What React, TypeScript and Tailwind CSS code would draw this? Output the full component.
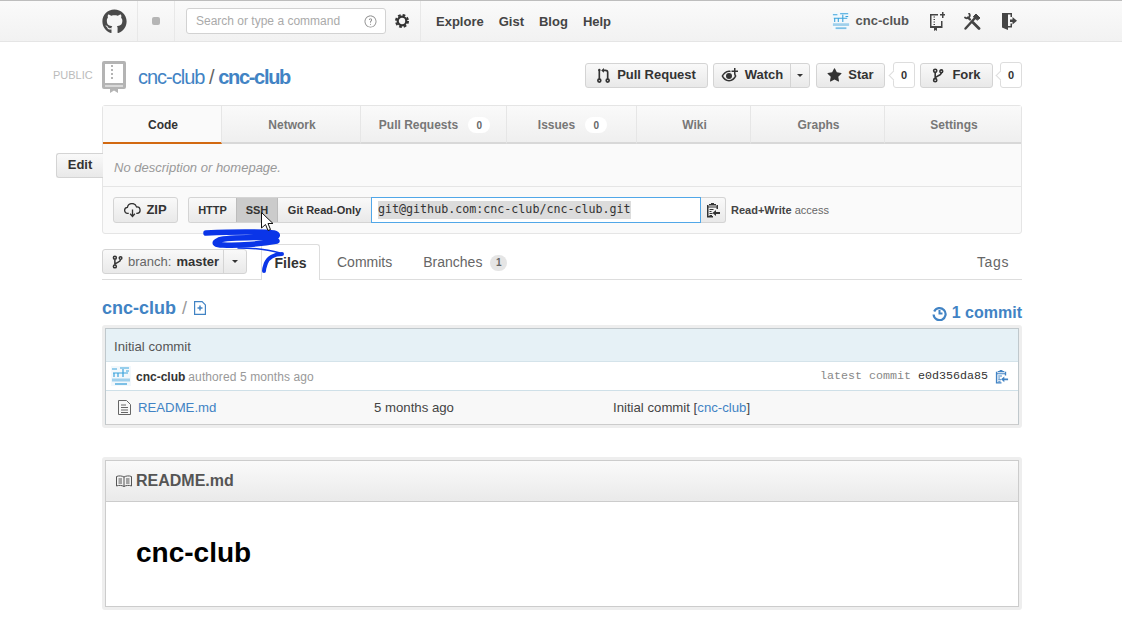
import React from "react";
import { FaGithub } from "react-icons/fa";
import { GoStarFill, GoQuestion } from "react-icons/go";

const Clippy = ({ className }: { className?: string }) => (
  <svg viewBox="0 0 16 16" className={className} fill="currentColor">
    <path d="M6 1h3v1h2v1.500H4V2h2V1zM2 3h1.500v1.500h8V3H13v4h-1.500V5.500h-8V14H8v1.500H2V3z" />
    <path d="M4.500 7h4v1h-4zM4.500 9h2v1h-2zM4.500 11h3v1h-3zM4.500 13H7v1H4.500z" />
    <path d="M11 8v2h4v2h-4v2l-3.500-3z" />
  </svg>
);

const Avatar = ({ className }: { className?: string }) => (
  <svg viewBox="0 0 20 20" className={className}>
    <rect width="20" height="20" fill="#f2f8fc" />
    <path d="M1 3h5M9 2h9M2 7h15M3 7v4M7 7v4M12 3v8M15 5h3" stroke="#3aa3dc" strokeWidth="1.200" fill="none" />
    <rect x="1" y="12.500" width="18" height="3" fill="#9fd0ec" />
    <rect x="4" y="17" width="12" height="2" fill="#7cc0e6" />
  </svg>
);

const Branch = ({ className }: { className?: string }) => (
  <svg viewBox="0 0 12 16" className={className} fill="none" stroke="currentColor" strokeWidth="1.700">
    <circle cx="3" cy="3" r="1.700" />
    <circle cx="3" cy="13" r="1.700" />
    <circle cx="9.500" cy="3.500" r="1.500" />
    <path d="M3 4.800v6.400M9.500 5c0 3.500-5.500 3-6.500 6" />
  </svg>
);

const PullRequest = ({ className }: { className?: string }) => (
  <svg viewBox="0 0 14 16" className={className} fill="none" stroke="currentColor" strokeWidth="1.800">
    <circle cx="2.500" cy="13.500" r="1.600" />
    <circle cx="11.500" cy="13.500" r="1.600" />
    <path d="M2.500 11.800V2M11.500 11.800V4.500c0-1.500-1-2-2.500-2H7" />
    <path d="M7.500 0v5L4.500 2.500z" fill="currentColor" stroke="none" />
    <circle cx="2.500" cy="2" r="1.300" fill="currentColor" stroke="none" />
  </svg>
);

const ButtonBase =
  "flex h-[25px] items-center rounded-[3px] border border-[#d4d4d4] bg-linear-to-b from-[#f9f9f9] to-[#e9e9e9] text-[13px] font-bold text-[#333]";

const Count = ({ n, className }: { n: number; className: string }) => (
  <div className={`relative flex h-[26px] w-[22px] items-center justify-center rounded-[3px] border border-[#ddd] bg-white text-[11px] font-bold text-[#333] ${className}`}>
    <span className="absolute left-[-4px] top-[9px] h-[7px] w-[7px] rotate-45 border-b border-l border-[#ddd] bg-white" />
    {n}
  </div>
);

const tabs = [
  { label: "Code", w: "w-[119px]", on: true },
  { label: "Network", w: "w-[139px]" },
  { label: "Pull Requests", w: "w-[146px]", badge: 0 },
  { label: "Issues", w: "w-[130px]", badge: 0 },
  { label: "Wiki", w: "w-[114px]" },
  { label: "Graphs", w: "w-[134px]" },
  { label: "Settings", w: "w-[136px]" },
];

const App: React.FC = () => {
  return (
    <div
      className="relative h-[629px] w-[1122px] overflow-hidden bg-white text-[#333]"
      style={{ fontFamily: '"Liberation Sans", Arial, sans-serif' }}
    >
      {/* Top bar */}
      <div className="flex h-[42px] border-t border-b border-t-[#bdbdbd] border-b-[#e5e5e5] bg-linear-to-b from-[#fafafa] to-[#f2f2f2] pl-[102px]">
        <div className="flex w-[35px] items-center">
          <FaGithub className="h-[25px] w-[25px] text-[#4a4a4a]" />
        </div>
        <div className="flex w-[38px] items-center justify-center border-x border-[#e8e8e8]">
          <span className="h-[8px] w-[8px] rounded-[2px] bg-[#b5b5b5]" />
        </div>
        <div className="flex items-center pl-[11px]">
          <div className="flex h-[26px] w-[200px] items-center justify-between whitespace-nowrap rounded-[3px] border border-[#d2d2d2] bg-white pl-[9px] pr-[8px] text-[12px] text-[#aaa]">
            <span>Search or type a command</span>
            <GoQuestion className="h-[13px] w-[13px] text-[#888]" />
          </div>
          <svg viewBox="0 0 16 16" className="ml-[8px] h-[16px] w-[16px] text-[#333]" fill="none" stroke="currentColor">
            <circle cx="8" cy="8" r="4.300" strokeWidth="2.200" />
            <circle cx="8" cy="8" r="6" strokeWidth="2" strokeDasharray="2.700 2" />
          </svg>
        </div>
        <div className="ml-[10px] flex items-center gap-[15px] border-l border-[#e8e8e8] pl-[15px] pt-[2px] text-[13px] font-bold text-[#444]">
          <span>Explore</span>
          <span>Gist</span>
          <span>Blog</span>
          <span>Help</span>
        </div>
        <div className="ml-auto flex items-center pr-[105px]">
          <Avatar className="h-[18px] w-[18px]" />
          <span className="ml-[6px] text-[13px] font-bold text-[#555]">cnc-club</span>
          <svg viewBox="0 -1 16 19" className="ml-[20px] h-[19px] w-[16px] text-[#444]" fill="currentColor">
            <path d="M1 1h8v1.500H2.500V13H12V8h1.500v7H8v3l-1.500-1L5 18v-3H1V1z" />
            <path d="M4.500 3.500H6v1H4.500zM4.500 6H6v1H4.500zM4.500 8.500H6v1H4.500zM4.500 11H6v1H4.500zM11 1h2V-1h1.500V1H16v1.500h-1.500v2.500H13V2.500h-2z" />
          </svg>
          <svg viewBox="0 0 17 17" className="ml-[19px] h-[17px] w-[17px] text-[#444]" fill="none" stroke="currentColor" strokeLinecap="round">
            <path d="M1.500 15.500 11 5" strokeWidth="2.400" />
            <path d="M9.500 3.500 12 1l4 4-2.500 2z" fill="currentColor" strokeWidth="1" />
            <path d="M6 6.500 4 4.500" strokeWidth="2.400" />
            <path d="M1 4.500a3.200 3.200 0 0 0 4-.1 3.200 3.200 0 0 0 .1-3.900" strokeWidth="1.800" />
            <path d="M9 9.500 15 15.500" strokeWidth="2.800" />
          </svg>
          <svg viewBox="0 0 16 18" className="ml-[20px] h-[18px] w-[16px] text-[#444]" fill="currentColor">
            <path d="M1 1h10v4H9.500V2.500H7V14h2.500v-2.500H11V15.500H7V18L1 15.500V1z" />
            <path d="M11.500 5v2.500H9v2.500h2.500v2.500L16 8.800z" />
          </svg>
        </div>
      </div>

      <div className="ml-[102px] w-[920px]">
        {/* Repo title and actions */}
        <div className="flex h-[63px] items-center pt-[3px]">
          <span className="-ml-[49px] w-[49px] text-[11px] text-[#bbb]">PUBLIC</span>
          <svg viewBox="0 0 24 32" className="mt-[4px] h-[32px] w-[24px] text-[#b4b4b4]" fill="currentColor">
            <path fillRule="evenodd" d="M2 0h20a2 2 0 0 1 2 2v24a2 2 0 0 1-2 2h-6v4l-4-2.500L8 32v-4H2a2 2 0 0 1-2-2V2a2 2 0 0 1 2-2zm1 3v19h18V3H3zm0 21.500V25.500h18v-1H3z" />
            <path d="M9 4h2v2H9zM9 8h2v2H9zM9 12h2v2H9zM9 16h2v2H9z" />
          </svg>
          <div className="ml-[12px] mt-[3px] text-[20px] leading-none tracking-[-1px] text-[#4183c4]">
            cnc-club <span className="text-[#666]">/</span>{" "}
            <span className="font-bold tracking-[-1.300px]">cnc-club</span>
          </div>
          <div className="ml-auto flex items-center">
            <div className={`${ButtonBase} w-[123px] justify-center gap-[7px]`}>
              <PullRequest className="h-[15px] w-[13px]" />
              Pull Request
            </div>
            <div className={`${ButtonBase} ml-[5px] w-[97px]`}>
              <div className="flex h-full w-[77px] items-center justify-center gap-[6px] border-r border-[#d4d4d4]">
                <svg viewBox="0 0 18 14" className="h-[14px] w-[18px]" fill="currentColor">
                  <path d="M8 2.500C4.500 2.500 2 5 .500 8 2 11 4.500 13.500 8 13.500s6-2.500 7.500-5.500c-.4-.8-.9-1.500-1.400-2.200l-1.200 1c.3.400.600.800.900 1.200-1.300 2.200-3.300 4-5.800 4S3.500 10.200 2.200 8C3.500 5.800 5.500 4 8 4c.500 0 1 .1 1.500.2V2.700C9 2.600 8.500 2.500 8 2.500z" />
                  <circle cx="8" cy="8" r="3" />
                  <path d="M13 0h1.500v2.500H17V4h-2.500v2.500H13V4h-2.500V2.500H13z" />
                </svg>
                Watch
              </div>
              <span className="mx-auto h-0 w-0 border-x-[3px] border-t-[3px] border-x-transparent border-t-[#333]" />
            </div>
            <div className={`${ButtonBase} ml-[6px] w-[69px] justify-center gap-[6px]`}>
              <GoStarFill className="h-[15px] w-[15px]" />
              Star
            </div>
            <Count n={0} className="ml-[8px]" />
            <div className={`${ButtonBase} ml-[5px] w-[73px] justify-center gap-[8px]`}>
              <Branch className="h-[15px] w-[12px]" />
              Fork
            </div>
            <Count n={0} className="ml-[7px]" />
          </div>
        </div>

        {/* Tabs + clone panel */}
        <div className="h-[129px] rounded-[3px] border border-[#e5e5e5] bg-[#fafafa]">
          <div className="flex h-[38px] border-b-2 border-[#d8d8d8] bg-linear-to-b from-[#fafafa] to-[#efefef]">
            {tabs.map((t) => (
              <div
                key={t.label}
                className={`${t.w} -mb-[2px] flex items-center justify-center gap-[10px] border-r border-[#e6e6e6] pl-[2px] pt-[2px] text-[12px] font-bold last:border-r-0 ${
                  t.on ? "border-b-2 border-b-[#d26911] bg-[#fafafa] text-[#333]" : "border-b-2 border-b-[#d8d8d8] text-[#777]"
                }`}
              >
                {t.label}
                {t.badge !== undefined && (
                  <span className="flex h-[16px] w-[22px] items-center justify-center rounded-full bg-white text-[10px] text-[#666]">
                    {t.badge}
                  </span>
                )}
              </div>
            ))}
          </div>
          <div className="flex h-[43px] items-center border-b border-[#e5e5e5]">
            <div className="-ml-[47px] flex h-[25px] w-[47px] items-center justify-center rounded-l-[3px] border border-r-0 border-[#d4d4d4] bg-linear-to-b from-[#f9f9f9] to-[#e9e9e9] text-[13px] font-bold text-[#333]">
              Edit
            </div>
            <span className="ml-[11px] mt-[5px] text-[13px] italic text-[#999]">No description or homepage.</span>
          </div>
          <div className="flex h-[46px] items-center pl-[10px]">
            <div className={`${ButtonBase} h-[26px] w-[65px] justify-center gap-[5px]`}>
              <svg viewBox="0 0 18 16" className="h-[15px] w-[17px]" fill="none" stroke="currentColor" strokeWidth="1.400">
                <path d="M5 11H4a3.200 3.200 0 0 1-.4-6.400 5 5 0 0 1 9.700-.4A3.400 3.400 0 0 1 14 11h-1" />
                <path d="M9 7v7M6.500 11.500 9 14.500l2.500-3" />
              </svg>
              ZIP
            </div>
            <div className="ml-[10px] flex h-[26px] overflow-hidden rounded-l-[3px] border border-r-0 border-[#d4d4d4] text-[11px] font-bold text-[#333]">
              <span className="flex w-[47px] items-center justify-center bg-linear-to-b from-[#f9f9f9] to-[#e9e9e9]">HTTP</span>
              <span className="flex w-[42px] items-center justify-center border-x border-[#bcbcbc] bg-[#cbcbcb]">SSH</span>
              <span className="flex w-[93px] items-center justify-center bg-linear-to-b from-[#f9f9f9] to-[#e9e9e9]">Git Read-Only</span>
            </div>
            <div
              className="flex h-[26px] w-[330px] items-center border border-[#51a7e8] bg-white pl-[6px] text-[11.670px] text-[#333]"
              style={{ fontFamily: '"DejaVu Sans Mono", monospace' }}
            >
              <span className="bg-[#dcdcdc]">git@github.com:cnc-club/cnc-club.git</span>
            </div>
            <div className="flex h-[26px] w-[25px] items-center justify-center rounded-r-[3px] border border-l-0 border-[#d4d4d4] bg-linear-to-b from-[#f9f9f9] to-[#e9e9e9] text-[#333]">
              <Clippy className="h-[16px] w-[16px]" />
            </div>
            <span className="ml-[5px] text-[11px] text-[#666]">
              <b className="text-[#444]">Read+Write</b> access
            </span>
          </div>
        </div>

        {/* Branch selector and file tabs */}
        <div className="mt-[10px] flex h-[36px] items-center border-b border-[#ddd]">
          <div className={`${ButtonBase} h-[25px] w-[145px]`}>
            <div className="flex h-full w-[121px] items-center gap-[5px] border-r border-[#d4d4d4] pl-[9px] font-normal text-[#666]">
              <Branch className="h-[14px] w-[11px] text-[#333]" />
              branch: <b className="text-[#333]">master</b>
            </div>
            <span className="mx-auto h-0 w-0 border-x-[3px] border-t-[3px] border-x-transparent border-t-[#333]" />
          </div>
          <div className="ml-[14px] -mb-px flex h-[36px] w-[59px] items-center justify-center rounded-t-[3px] border border-b-0 border-[#ddd] bg-white pt-[2px] text-[14px] font-bold text-[#333]">
            Files
          </div>
          <span className="ml-[17px] pt-[2px] text-[14px] text-[#666]">Commits</span>
          <span className="ml-[31px] pt-[2px] text-[14px] text-[#666]">Branches</span>
          <span className="ml-[8px] mt-[2px] flex h-[16px] w-[17px] items-center justify-center rounded-full bg-[#e5e5e5] text-[10px] font-bold text-[#666]">
            1
          </span>
          <span className="ml-auto pr-[13px] pt-[2px] text-[14px] tracking-[0.6px] text-[#666]">Tags</span>
        </div>

        {/* Breadcrumb */}
        <div className="mt-[14px] flex h-[31px] items-start justify-between">
          <div className="flex items-center text-[18px] leading-[28px]">
            <span className="font-bold text-[#4183c4]">cnc-club</span>
            <span className="ml-[6px] font-normal text-[#999]">/</span>
            <svg viewBox="0 0 12 14" className="ml-[7px] h-[14px] w-[12px] text-[#4183c4]" fill="none" stroke="currentColor" strokeWidth="1.200">
              <path d="M.6.6h7.500l3.300 3.300v9.500H.6z" />
              <path d="M6 4.500v5M3.500 7h5" strokeWidth="1.500" />
            </svg>
          </div>
          <div className="mt-[10px] flex items-center gap-[5px] text-[16px] font-bold leading-[18px] text-[#4183c4]">
            <svg viewBox="0 0 15 15" className="h-[15px] w-[15px]" fill="none" stroke="currentColor" strokeWidth="2.200">
              <path d="M2.200 5.500a6 6 0 1 1-.6 3" />
              <path d="M7.500 4v3.500h3" strokeWidth="2" />
            </svg>
            1 commit
          </div>
        </div>

        {/* File list */}
        <div className="rounded-[3px] bg-[#eee] p-[3px]">
          <div className="border border-[#c0c8cc] border-b-[#ccc]">
            <div className="flex h-[33px] items-center border-b border-[#d4e3ea] bg-[#e6f1f6] pl-[8px] pt-[3px] text-[13.200px] text-[#555]">
              Initial commit
            </div>
            <div className="flex h-[29px] items-center border-b border-[#cfe0e8] bg-white pl-[5px] pr-[9px] text-[12px]">
              <Avatar className="h-[20px] w-[20px]" />
              <b className="ml-[5px] pt-[1px] text-[#333]">cnc-club</b>
              <span className="ml-[3px] pt-[1px] tracking-[0.1px] text-[#999]">authored 5 months ago</span>
              <div
                className="ml-auto mt-[2px] flex items-center text-[11.670px]"
                style={{ fontFamily: '"Liberation Mono", monospace' }}
              >
                <span className="text-[#888]">latest commit</span>
                <span className="ml-[7px] text-[#333]">e0d356da85</span>
              </div>
              <Clippy className="ml-[6px] h-[15px] w-[15px] text-[#4183c4]" />
            </div>
            <div className="flex h-[33px] items-center bg-[#f8f8f8] pl-[12px] text-[13.200px] text-[#444]">
              <svg viewBox="0 0 13 15" className="h-[15px] w-[13px] text-[#666]" fill="none" stroke="currentColor">
                <path d="M.5.5h8l4 4v10H.5zM3 5h5M3 7.500h7M3 10h7M3 12.500h7" />
              </svg>
              <span className="ml-[7px] w-[236px] text-[#4183c4]">README.md</span>
              <span className="w-[239px]">5 months ago</span>
              <span>
                Initial commit [<span className="text-[#4183c4]">cnc-club</span>]
              </span>
            </div>
          </div>
        </div>

        {/* README */}
        <div className="mt-[29px] rounded-[3px] bg-[#eee] p-[3px]">
          <div className="border border-[#ccc] bg-white">
            <div className="flex h-[41px] items-center gap-[4px] border-b border-[#ccc] bg-linear-to-b from-[#fafafa] to-[#eaeaea] pl-[10px] text-[16px] font-bold text-[#555]">
              <svg viewBox="0 0 16 12" className="h-[12px] w-[16px] text-[#555]" fill="none" stroke="currentColor">
                <path d="M.5 1.500C3 .5 6 .8 8 2c2-1.200 5-1.500 7.500-.5v9.500C13 10 10 10.300 8 11.500 6 10.300 3 10 .5 11zM8 2v9.500M2.500 4h3.500M2.500 6h3.500M2.500 8h3.500M10 4h3.500M10 6h3.500M10 8h3.500" />
              </svg>
              README.md
            </div>
            <div className="flex h-[104px] items-center pb-[2px] pl-[30px] text-[28px] font-bold text-black">cnc-club</div>
          </div>
        </div>
      </div>

      {/* Pen scribble drawn over the screenshot */}
      <svg className="pointer-events-none absolute left-0 top-0 h-[629px] w-[1122px]" viewBox="0 0 1122 629" fill="none" stroke="#0a35e8" strokeLinecap="round" strokeLinejoin="round">
        <path d="M206 233c20-1 46-2 68 0 5 1 4 4-1 4-16 1-44 0-54 3-7 3-3 5 4 5 14 1 38-1 54-4" strokeWidth="5.500" />
        <path d="M238 248c14 0 32 2 42 5" strokeWidth="1.500" />
        <path d="M282 254c-8 0-14 4-16 9-1 3-2 5-2 8" strokeWidth="4" />
      </svg>
      {/* Mouse cursor */}
      <svg className="absolute left-[261px] top-[212px] h-[20px] w-[13px]" viewBox="0 0 13 20">
        <path d="M.5.5v15.500l4-3.500 2.500 6 2.500-1-2.500-6h5z" fill="#fff" stroke="#111" />
      </svg>
    </div>
  );
};

export default App;
